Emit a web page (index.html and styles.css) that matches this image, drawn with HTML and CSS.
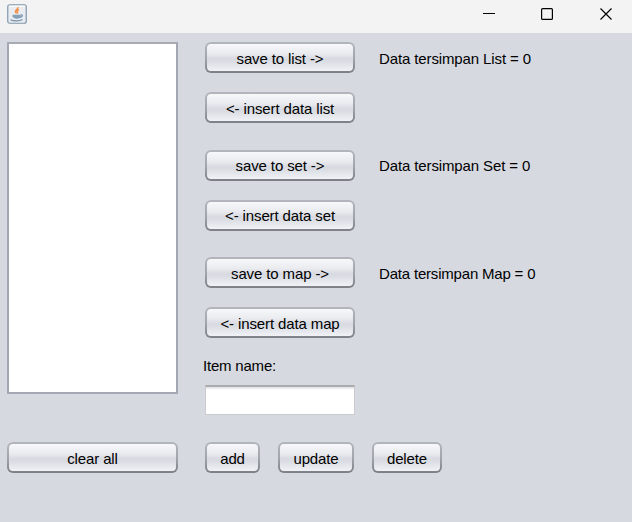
FILE: index.html
```html
<!DOCTYPE html>
<html lang="id">
<head>
<meta charset="utf-8">
<title>Data</title>
<link rel="stylesheet" href="styles.css">
</head>
<body>
<header class="titlebar">
  <svg class="java" width="20" height="20" viewBox="0 0 20 20" fill="none">
    <rect x=".75" y=".75" width="18.5" height="18.5" rx="2" fill="#e9edf1" stroke="#8297aa" stroke-width="1.2"/>
    <path d="M2 2.300h16" stroke="#fff"/>
    <path d="M11 3c.5 2.200-3.200 2.800-2.600 4.800.2.700.8 1 .9 1.700M12 5.500c-1.800.8-2.300 1.500-1.600 2.500.4.600.2 1-.2 1.500" stroke="#f3904a" stroke-width="1.500"/>
    <path d="M5.500 10.800h8v1.800c0 1.500-1.500 2.200-3.500 2.200s-3.600-.7-4.500-2.200z" fill="#84a0b9"/>
    <path d="M13.500 11c2.600-.8 2.500 1.800-.8 2.300M3.500 15.700c2.500 1.700 9.500 1.600 12-.2" stroke="#7691aa" stroke-width="1.200"/>
  </svg>
  <svg class="controls" width="126" height="13" viewBox="0 0 126 13" fill="none" stroke="#000">
    <path d="M0 6.500h12"/>
    <rect x="58.600" y="1.600" width="10.800" height="10.800" rx="1" stroke-width="1.200"/>
    <path d="M117.500 1.500l11 11M128.500 1.500l-11 11" stroke-width="1.200"/>
  </svg>
</header>
<main class="content">
  <section class="left">
    <textarea class="list" aria-label="Data"></textarea>
    <button class="btn">clear all</button>
  </section>
  <section class="right">
    <div class="group">
      <div class="row"><button class="btn wide">save to list -&gt;</button><span class="status">Data tersimpan List = 0</span></div>
      <button class="btn wide">&lt;- insert data list</button>
    </div>
    <div class="group">
      <div class="row"><button class="btn wide">save to set -&gt;</button><span class="status">Data tersimpan Set = 0</span></div>
      <button class="btn wide">&lt;- insert data set</button>
    </div>
    <div class="group last">
      <div class="row"><button class="btn wide">save to map -&gt;</button><span class="status map">Data tersimpan Map = 0</span></div>
      <button class="btn wide">&lt;- insert data map</button>
    </div>
    <label class="label" for="item">Item name:</label>
    <input class="field" id="item" type="text">
    <div class="actions">
      <button class="btn add">add</button>
      <button class="btn update">update</button>
      <button class="btn delete">delete</button>
    </div>
  </section>
</main>
</body>
</html>
```
FILE: styles.css
```css
* { box-sizing: border-box; }
body {
  margin: 0;
  height: 522px;
  overflow: hidden;
  background: #d6d9e0;
  color: #000;
  font: 15px/18px "Liberation Sans", Arial, sans-serif;
  letter-spacing: -.12px;
}
.titlebar {
  height: 33px;
  padding: 4px 20px 0 7px;
  display: flex;
  justify-content: space-between;
  background: #f3f3f3;
}
.controls { margin-top: 3px; overflow: visible; margin-right: 3px; }
.content { display: flex; gap: 27px; padding: 9px 0 0 7px; }
.left { display: flex; flex-direction: column; width: 171px; gap: 48px; }
.list {
  display: block;
  height: 352px;
  border: 2px solid #a4a9b3;
  border-color: #a8abb4 #a2a8b3 #a4a9b3;
  background: #fff;
  resize: none;
  outline: 0;
}
.right { display: flex; flex-direction: column; align-items: flex-start; }
.group { display: flex; flex-direction: column; gap: 19px; margin-bottom: 26.500px; }
.last { margin-bottom: 19px; }
.row { display: flex; align-items: center; gap: 24px; }
.status { padding-top: 2px; }
.map { letter-spacing: -.19px; }
.btn {
  height: 31px;
  padding: 2px 0 0;
  border: 2px solid transparent;
  border-radius: 6px;
  background:
    linear-gradient(#f7f8fa 0, #e9ebef 35%, #d8dae1 55%, #dadde3 65%, #f0f2f6 100%) padding-box,
    linear-gradient(#b3b6bc, #a0a3a9 55%, #7c7f85) border-box;
  color: #000;
  font: inherit;
  letter-spacing: inherit;
  white-space: nowrap;
}
.wide { width: 150px; }
.label { margin-left: -2px; letter-spacing: -.2px; }
.field {
  width: 150px;
  height: 30px;
  margin-top: 10px;
  padding: 4px;
  border: 1px solid #c9cbd0;
  border-top: 2px solid #a9abae;
  background: linear-gradient(#dedfe1, #fff 3px);
  outline: 0;
}
.actions { display: flex; gap: 18px; margin-top: 27px; }
.add { width: 55px; }
.update { width: 76px; }
.delete { width: 70px; }
```
